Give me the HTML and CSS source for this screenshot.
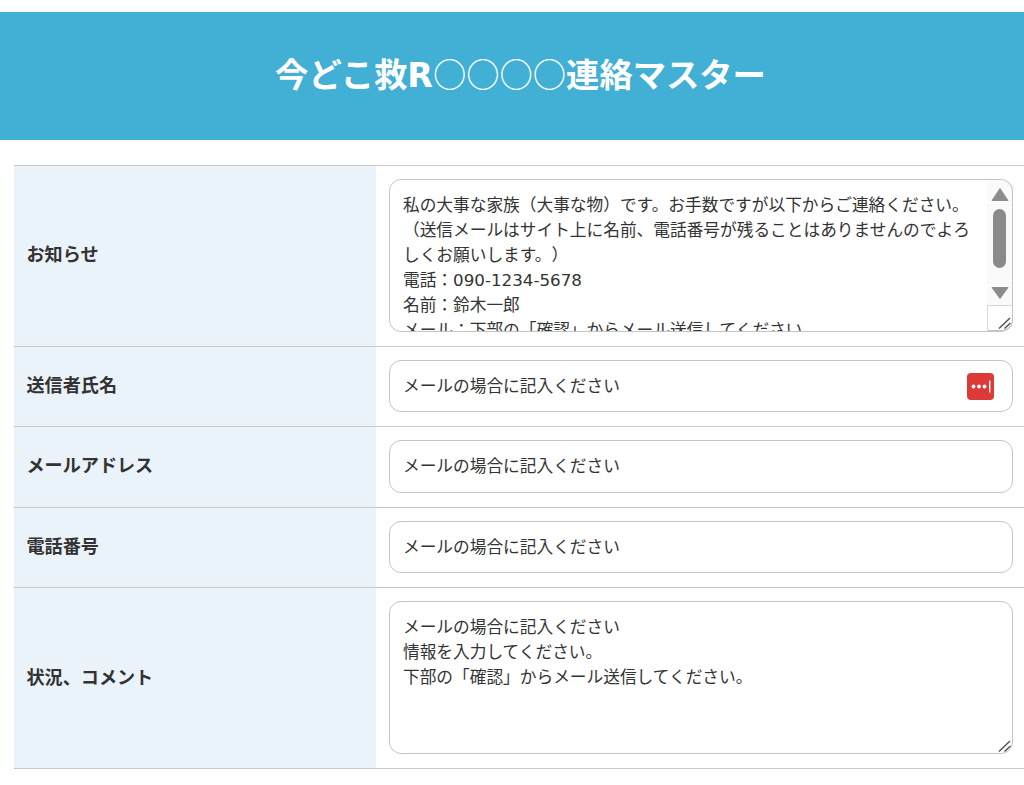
FILE: index.html
```html
<!DOCTYPE html>
<html lang="ja">
<head>
<meta charset="utf-8">
<title>今どこ救R○○○○連絡マスター</title>
<link rel="stylesheet" href="styles.css">
</head>
<body>
<header class="banner"><h1 class="banner-title">今どこ救R<span class="circles">○○○○</span>連絡マスター</h1></header>
<form class="form">
  <div class="row">
    <label class="label">お知らせ</label>
    <div class="cell">
      <div class="field">
        <textarea class="control area" readonly>私の大事な家族（大事な物）です。お手数ですが以下からご連絡ください。（送信メールはサイト上に名前、電話番号が残ることはありませんのでよろしくお願いします。）
電話：090-1234-5678
名前：鈴木一郎
メール：下部の「確認」からメール送信してください。</textarea>
        <div class="scrollbar">
          <svg class="scroll-art" width="26" height="152" viewBox="0 0 26 152" aria-hidden="true">
            <path d="M5 20.5 L13 8.5 L21 20.5 Z" fill="#8c8c8c" stroke="#8c8c8c" stroke-linejoin="round"/>
            <rect x="6" y="29" width="13" height="59" rx="6.5" fill="#8a8a8a"/>
            <path d="M5 107.5 H21 L13 118.5 Z" fill="#8c8c8c" stroke="#8c8c8c" stroke-linejoin="round"/>
          </svg>
          <div class="resizer">
            <svg class="grip-art" width="13" height="12" viewBox="0 0 13 12" aria-hidden="true"><path d="M1 11.5 L12 1 M6.5 11.5 L12.5 6" stroke="#555" stroke-width="1.5" fill="none"/></svg>
          </div>
        </div>
      </div>
    </div>
  </div>
  <div class="row">
    <label class="label">送信者氏名</label>
    <div class="cell">
      <div class="field">
        <input class="control line" type="text" value="メールの場合に記入ください" readonly>
        <svg class="pass-icon" width="27" height="27" viewBox="0 0 27 27" aria-hidden="true">
          <rect width="27" height="27" rx="4" fill="#dc3a39"/>
          <circle cx="6.5" cy="13.5" r="1.9" fill="#fff"/>
          <circle cx="12" cy="13.5" r="1.9" fill="#fff"/>
          <circle cx="17.5" cy="13.5" r="1.9" fill="#fff"/>
          <rect x="22" y="7.5" width="1.4" height="12" fill="#fff"/>
        </svg>
      </div>
    </div>
  </div>
  <div class="row">
    <label class="label">メールアドレス</label>
    <div class="cell"><div class="field"><input class="control line" type="text" value="メールの場合に記入ください" readonly></div></div>
  </div>
  <div class="row">
    <label class="label">電話番号</label>
    <div class="cell"><div class="field"><input class="control line" type="text" value="メールの場合に記入ください" readonly></div></div>
  </div>
  <div class="row">
    <label class="label">状況、コメント</label>
    <div class="cell">
      <div class="field">
        <textarea class="control area" readonly>メールの場合に記入ください
情報を入力してください。
下部の「確認」からメール送信してください。</textarea>
        <svg class="grip-art grip-solo" width="13" height="12" viewBox="0 0 13 12" aria-hidden="true"><path d="M1 11.5 L12 1 M6.5 11.5 L12.5 6" stroke="#555" stroke-width="1.5" fill="none"/></svg>
      </div>
    </div>
  </div>
</form>
</body>
</html>
```
FILE: styles.css
```css
* { box-sizing: border-box; }
html, body { margin: 0; padding: 0; background: #fff; }
body {
  padding-top: 12px;
  overflow: hidden;
  font-family: "DejaVu Sans", "Noto Sans CJK JP", sans-serif;
  color: #333;
  text-spacing-trim: space-all;
}
.banner {
  height: 127.5px;
  padding: 0 0 2px 17px;
  background: #42afd4;
  display: flex;
  align-items: center;
  justify-content: center;
}
.banner-title {
  margin: 0;
  color: #fff;
  font-size: 33.3px;
  font-weight: 700;
  line-height: 1.2;
}
.circles {
  font-family: "Noto Sans CJK JP", sans-serif;
  font-weight: 400;
}
.form {
  margin: 25px 0 0 14px;
  border-bottom: 1px solid #c8c8c8;
}
.row {
  display: grid;
  grid-template-columns: 362px 1fr;
  border-top: 1px solid #c8c8c8;
}
.label {
  display: flex;
  align-items: center;
  padding: 0 0 5px 12.5px;
  background: #ebf3fa;
  font-size: 18.1px;
  font-weight: 700;
}
.cell { padding: 13px 11px 14px 13px; }
.field { position: relative; }
.control {
  display: block;
  width: 100%;
  border: 1px solid #c4c4c4;
  border-radius: 12px;
  background: #fff;
  color: #333;
  font: 400 16.7px/25px "DejaVu Sans", "Noto Sans CJK JP", sans-serif;
  text-spacing-trim: space-all;
  outline: none;
}
.line { height: 52.5px; padding: 0 13px 2px; }
.area {
  height: 153px;
  padding: 13px 36px 0 13px;
  overflow: hidden;
  resize: none;
}
.scrollbar {
  position: absolute;
  top: 1px;
  right: 0;
  bottom: 1px;
  width: 26px;
  background: #fafafa;
  border-right: 1px solid #c4c4c4;
  border-radius: 0 12px 12px 0;
}
.scroll-art { display: block; }
.resizer {
  position: absolute;
  right: -1px;
  bottom: 0;
  width: 26px;
  height: 26px;
  background: #fff;
  border-top: 1px solid #d8d8d8;
  border-left: 1px solid #d8d8d8;
  border-right: 1px solid #c4c4c4;
  border-bottom: 1px solid #c4c4c4;
  border-bottom-right-radius: 11px;
}
.resizer .grip-art { position: absolute; right: 1px; bottom: 1px; }
.grip-solo { position: absolute; right: 2px; bottom: 2px; }
.pass-icon { position: absolute; top: 13px; right: 19px; }
```
